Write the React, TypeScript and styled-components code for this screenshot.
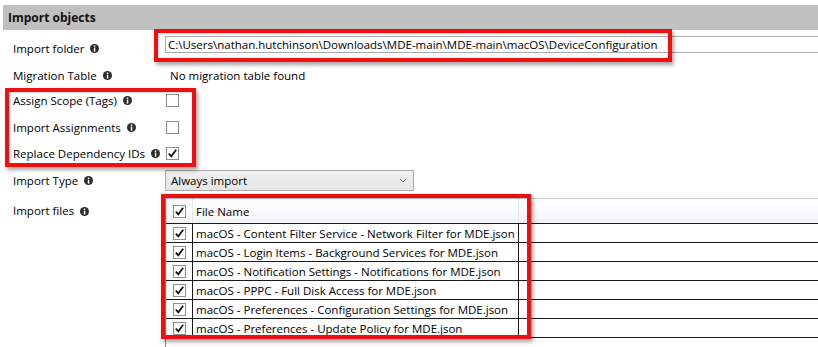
import styled, { createGlobalStyle } from 'styled-components';

const GlobalStyle = createGlobalStyle`
  body {
    margin: 0;
    background: #fff;
    font-family: "Open Sans", "Noto Sans", sans-serif;
    font-size: 11.5px;
    color: #000;
  }
`;

const Page = styled.div`
  position: relative;
  width: 818px;
  height: 347px;
  overflow: hidden;
  padding-top: 5px;
  box-sizing: border-box;
`;

const SectionHeader = styled.div`
  margin-left: 3px;
  height: 25px;
  display: flex;
  align-items: center;
  padding-left: 5px;
  background: #c0c0c0;
  font-weight: 700;
  font-size: 12px;
  color: #111;
`;

const Form = styled.div`
  display: flex;
  flex-direction: column;
  padding-left: 13px;
`;

const Row = styled.div<{ $h?: number; $top?: boolean }>`
  display: grid;
  grid-template-columns: 152px 1fr;
  align-items: ${(p) => (p.$top ? 'start' : 'center')};
  height: ${(p) => (p.$h ? `${p.$h}px` : 'auto')};
`;

const Label = styled.div<{ $pad?: number }>`
  display: flex;
  align-items: center;
  gap: 6px;
  line-height: 16px;
  padding-top: ${(p) => p.$pad || 0}px;
  white-space: nowrap;
`;

const TextBox = styled.div`
  align-self: start;
  margin-top: 6px;
  height: 17px;
  display: flex;
  align-items: center;
  padding-left: 2px;
  border: 1px solid #abadb3;
  border-right: none;
  box-sizing: border-box;
  white-space: nowrap;
`;

const Value = styled.div`
  padding-left: 5px;
`;

const Box = styled.div`
  width: 13px;
  height: 13px;
  box-sizing: border-box;
  border: 1px solid #8e8f8f;
  background: #fff;
  display: flex;
  align-items: center;
  justify-content: center;
  margin-left: 1px;
`;

const Combo = styled.div`
  width: 249px;
  height: 21px;
  box-sizing: border-box;
  border: 1px solid #acacac;
  background: linear-gradient(#f0f0f0, #e5e5e5);
  display: flex;
  align-items: center;
  justify-content: space-between;
  padding: 0 6px 0 5px;
`;

const Table = styled.div`
  margin-top: 3px;
  height: 152px;
  border-left: 1px solid #828790;
  border-top: 1px solid #c5ccd6;
`;

const HeadRow = styled.div`
  display: grid;
  grid-template-columns: 27px 326px 1fr;
  height: 24px;
  background: linear-gradient(#ffffff, #f2f3f5);
  border-bottom: 1px solid #1a1a1a;
`;

const FileRow = styled.div`
  display: grid;
  grid-template-columns: 27px 326px 1fr;
  height: 18px;
  border-bottom: 1px solid #1a1a1a;
`;

const Cell = styled.div<{ $head?: boolean; $check?: boolean }>`
  display: flex;
  align-items: center;
  justify-content: ${(p) => (p.$check ? 'center' : 'flex-start')};
  padding-left: ${(p) => (p.$check ? 0 : 3)}px;
  border-right: 1px solid ${(p) => (p.$head ? '#e3e5e8' : '#1a1a1a')};
  white-space: nowrap;
  overflow: hidden;
`;

const Filler = styled.div``;

const Highlight = styled.div<{ $x: number; $y: number; $w: number; $h: number }>`
  position: absolute;
  left: ${(p) => p.$x}px;
  top: ${(p) => p.$y}px;
  width: ${(p) => p.$w}px;
  height: ${(p) => p.$h}px;
  box-sizing: border-box;
  border: 4px solid #f00e0e;
  box-shadow: 2px 3px 4px rgba(0, 0, 0, 0.35), inset 1px 1px 2px rgba(0, 0, 0, 0.15);
  pointer-events: none;
`;

function Info() {
  return (
    <svg width="9" height="9" viewBox="0 0 9 9">
      <circle cx="4.5" cy="4.5" r="4.5" fill="#2e2e2e" />
      <rect x="3.8" y="1.5" width="1.5" height="1.4" fill="#fff" />
      <rect x="3.8" y="3.6" width="1.5" height="4" fill="#fff" />
    </svg>
  );
}

function Check({ on }: { on?: boolean }) {
  return (
    <Box>
      {on && (
        <svg width="11" height="11" viewBox="0 0 11 11">
          <polyline points="1.8,5.6 4.3,8.4 9.2,1.8" fill="none" stroke="#111" strokeWidth="1.8" />
        </svg>
      )}
    </Box>
  );
}

const files = [
  'macOS - Content Filter Service - Network Filter for MDE.json',
  'macOS - Login Items - Background Services for MDE.json',
  'macOS - Notification Settings - Notifications for MDE.json',
  'macOS - PPPC - Full Disk Access for MDE.json',
  'macOS - Preferences - Configuration Settings for MDE.json',
  'macOS - Preferences - Update Policy for MDE.json',
];

export default function App() {
  return (
    <Page>
      <GlobalStyle />
      <SectionHeader>Import objects</SectionHeader>
      <Form>
        <Row $h={34}>
          <Label $pad={3}>Import folder <Info /></Label>
          <TextBox>C:\Users\nathan.hutchinson\Downloads\MDE-main\MDE-main\macOS\DeviceConfiguration</TextBox>
        </Row>
        <Row $h={23}>
          <Label>Migration Table <Info /></Label>
          <Value>No migration table found</Value>
        </Row>
        <Row $h={27}>
          <Label>Assign Scope (Tags) <Info /></Label>
          <Check />
        </Row>
        <Row $h={27}>
          <Label>Import Assignments <Info /></Label>
          <Check />
        </Row>
        <Row $h={25}>
          <Label>Replace Dependency IDs <Info /></Label>
          <Check on />
        </Row>
        <Row $h={29}>
          <Label>Import Type <Info /></Label>
          <Combo>
            Always import
            <svg width="8" height="5" viewBox="0 0 8 5">
              <polyline points="1,1 4,4 7,1" fill="none" stroke="#707070" strokeWidth="1" />
            </svg>
          </Combo>
        </Row>
        <Row $top>
          <Label $pad={8}>Import files <Info /></Label>
          <Table>
            <HeadRow>
              <Cell $head $check><Check on /></Cell>
              <Cell $head>File Name</Cell>
              <Filler />
            </HeadRow>
            {files.map((f) => (
              <FileRow key={f}>
                <Cell $check><Check on /></Cell>
                <Cell>{f}</Cell>
                <Filler />
              </FileRow>
            ))}
          </Table>
        </Row>
      </Form>
      <Highlight $x={154} $y={29} $w={518} $h={33} />
      <Highlight $x={5} $y={88} $w={191} $h={79} />
      <Highlight $x={161} $y={194} $w={370} $h={145} />
    </Page>
  );
}
